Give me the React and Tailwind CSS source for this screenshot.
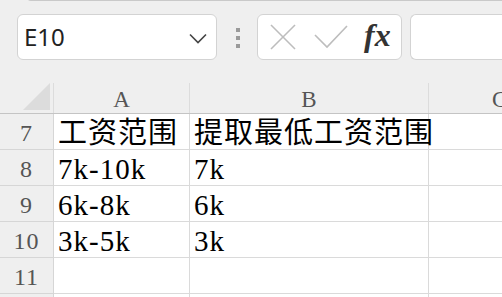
export default function App() {
  const rows = [
    { n: "7", a: "工资范围", b: "提取最低工资范围" },
    { n: "8", a: "7k-10k", b: "7k" },
    { n: "9", a: "6k-8k", b: "6k" },
    { n: "10", a: "3k-5k", b: "3k" },
    { n: "11", a: "", b: "" },
  ];
  const cellFont = { fontFamily: '"Liberation Serif", "Noto Sans CJK SC", serif' };
  return (
    <div className="w-[502px] h-[297px] overflow-hidden bg-[#efefef] flex flex-col">
      {/* toolbar */}
      <div className="h-[83px] shrink-0 flex flex-col">
        <div className="h-[4px] ml-[27px] border-b border-l border-[#c9c9c9] rounded-bl-[5px] -mt-[3px]" />
        <div className="flex items-start pt-[13px]">
          <div className="ml-[17px] w-[200px] h-[46px] bg-white border border-[#d3d3d3] rounded-[6px] flex items-center justify-between pl-[6px] pr-[9px]">
            <span className="text-[24px] text-[#222] leading-none" style={{ fontFamily: '"Noto Sans", sans-serif' }}>E10</span>
            <svg width="18" height="11" viewBox="0 0 18 11" className="mt-[2px]">
              <polyline points="1,1.5 9,9.5 17,1.5" fill="none" stroke="#444" strokeWidth="1.6" />
            </svg>
          </div>
          <div className="ml-[19px] mt-[14px] flex flex-col gap-[4px]">
            <div className="w-[4px] h-[4px] bg-[#9a9a9a]" />
            <div className="w-[4px] h-[4px] bg-[#9a9a9a]" />
            <div className="w-[4px] h-[4px] bg-[#9a9a9a]" />
          </div>
          <div className="ml-[17px] w-[145px] h-[46px] bg-white border border-[#d3d3d3] rounded-[6px] flex items-center pl-[12px]">
            <svg width="26" height="26" viewBox="0 0 26 26">
              <line x1="1" y1="1" x2="25" y2="25" stroke="#bdbdbd" strokeWidth="1.6" />
              <line x1="25" y1="1" x2="1" y2="25" stroke="#bdbdbd" strokeWidth="1.6" />
            </svg>
            <svg width="34" height="24" viewBox="0 0 34 24" className="ml-[18px]">
              <polyline points="1,10 13,22 33,1" fill="none" stroke="#bdbdbd" strokeWidth="1.6" />
            </svg>
            <span
              className="ml-[16px] text-[32px] italic font-bold text-[#333] leading-none -mt-[4px]"
              style={{ fontFamily: '"Liberation Serif", serif' }}
            >
              fx
            </span>
          </div>
          <div className="ml-[8px] flex-1 h-[46px] bg-white border border-r-0 border-[#d3d3d3] rounded-l-[6px]" />
        </div>
      </div>
      {/* column header */}
      <div className="flex h-[31px] shrink-0 border-b border-[#c4c4c4]" style={{ fontFamily: '"Liberation Serif", serif' }}>
        <div className="w-[54px] shrink-0 border-r border-[#dcdcdc] relative">
          <svg width="28" height="27" viewBox="0 0 28 27" className="absolute left-[23px] top-0">
            <polygon points="27,0 27,27 0,27" fill="#dcdcdc" />
          </svg>
        </div>
        <div className="w-[136px] shrink-0 border-r border-[#dcdcdc] flex items-end justify-center pb-[2px] text-[23px] text-[#555] leading-none">A</div>
        <div className="w-[239px] shrink-0 border-r border-[#dcdcdc] flex items-end justify-center pb-[2px] text-[23px] text-[#555] leading-none">B</div>
        <div className="flex-1 flex items-end pl-[63px] pb-[2px] text-[23px] text-[#555] leading-none overflow-hidden whitespace-nowrap">C</div>
      </div>
      {/* rows */}
      {rows.map((r) => (
        <div key={r.n} className="flex h-[36px] shrink-0">
          <div
            className="w-[54px] shrink-0 border-r border-b border-[#d6d6d6] flex items-center justify-center text-[24px] text-[#555] tracking-[1px] pt-[2px]"
            style={{ fontFamily: '"Liberation Serif", serif' }}
          >
            {r.n}
          </div>
          <div className="w-[136px] shrink-0 bg-white border-r border-b border-[#dadada] relative">
            <span
              className="absolute left-[4px] top-[1px] leading-[36px] text-[29px] tracking-[1px] text-black whitespace-nowrap"
              style={cellFont}
            >
              {r.a}
            </span>
          </div>
          <div className="w-[239px] shrink-0 bg-white border-r border-b border-[#dadada] relative">
            <span
              className="absolute left-[4px] top-[1px] leading-[36px] text-[29px] tracking-[1px] text-black whitespace-nowrap z-10"
              style={cellFont}
            >
              {r.b}
            </span>
          </div>
          <div className="flex-1 bg-white border-b border-[#dadada]" />
        </div>
      ))}
      <div className="flex flex-1">
        <div className="w-[54px] shrink-0 border-r border-[#d6d6d6]" />
        <div className="w-[136px] shrink-0 bg-white border-r border-[#dadada]" />
        <div className="w-[239px] shrink-0 bg-white border-r border-[#dadada]" />
        <div className="flex-1 bg-white" />
      </div>
    </div>
  );
}
